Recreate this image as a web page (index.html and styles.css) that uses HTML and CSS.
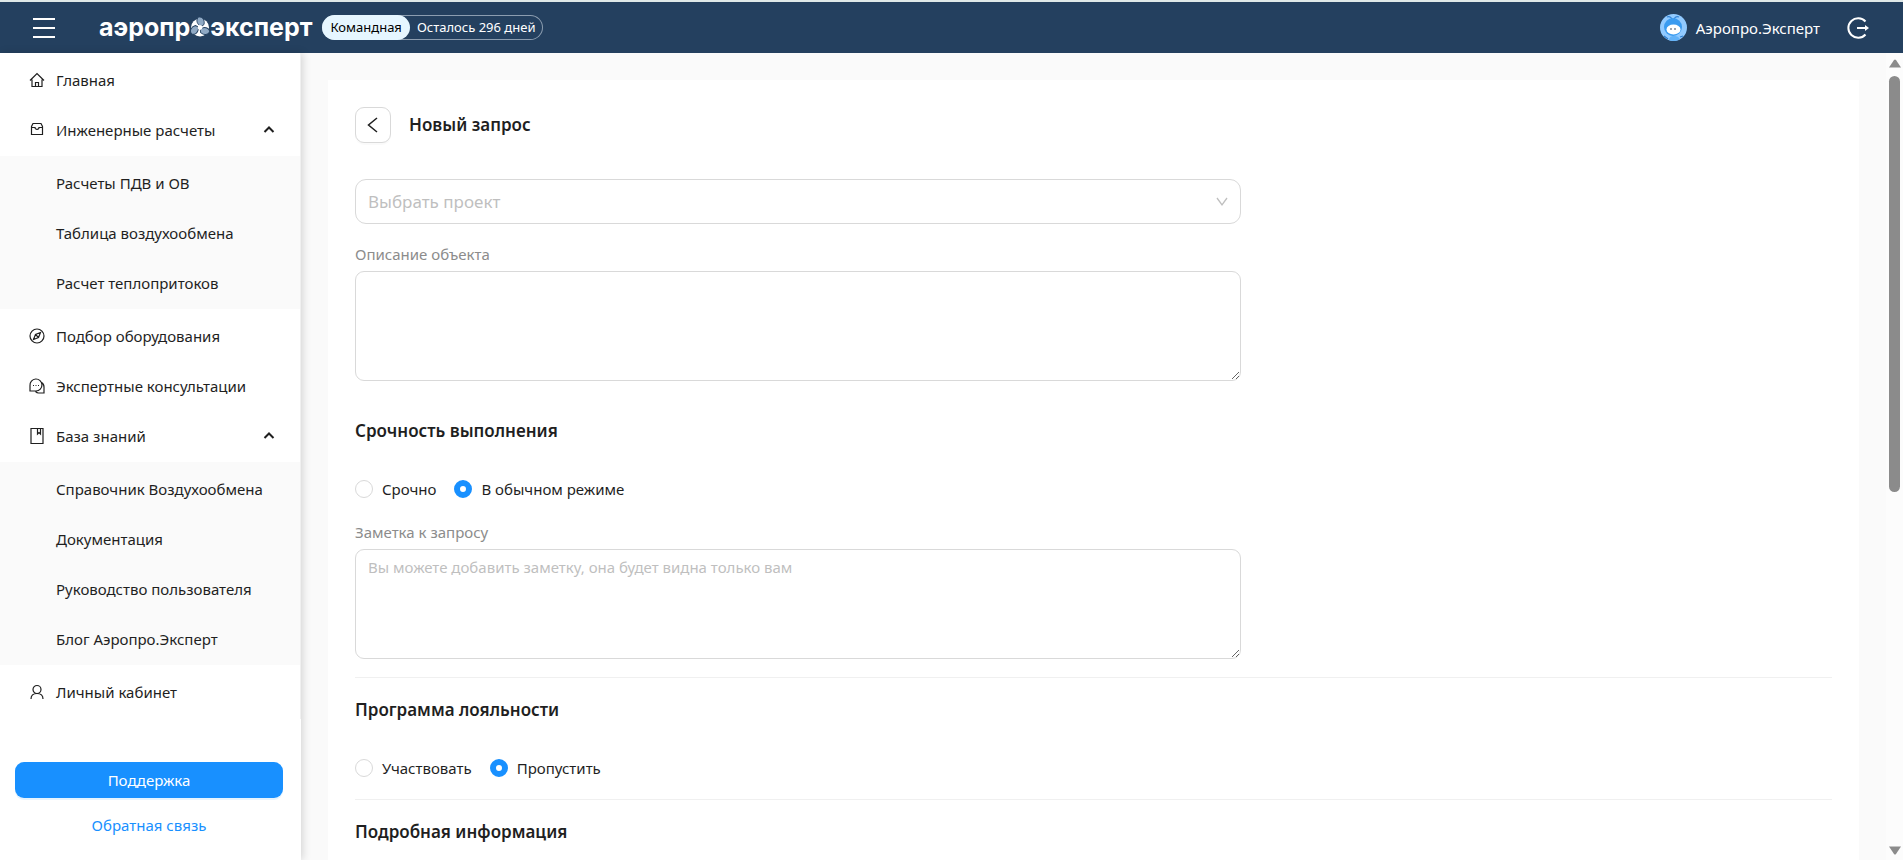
FILE: index.html
```
<!DOCTYPE html>
<html lang="ru">
<head>
    <meta charset="UTF-8">
    <meta name="viewport" content="width=device-width, initial-scale=1.0">
    <title>Аэропро.Эксперт - Новый запрос</title>
    <link rel="stylesheet" href="styles.css">
</head>
<body>
    <header class="header">
        <button class="icon-btn burger" aria-label="Меню">
            <svg width="22" height="22" viewBox="0 0 22 22" fill="none" stroke="currentColor" stroke-width="2">
                <path d="M0 2h22M0 11h22M0 20h22"/>
            </svg>
        </button>
        <a href="#" class="logo">
            <span>аэропр</span>
            <svg width="20" height="20" viewBox="0 0 20 20">
                <circle cx="10" cy="10.500" r="9" fill="#fff"/>
                <g fill="#8fa9c4" stroke="#24405f" stroke-width="0.900">
                    <path id="blade" d="M9.500 8.500C6.500 6 6 2.500 8.500 0c4-.500 6.500 3 5.500 7.500l-2 1.500z"/>
                    <use href="#blade" transform="rotate(120 10 10.500)"/>
                    <use href="#blade" transform="rotate(240 10 10.500)"/>
                </g>
                <circle cx="10" cy="10.500" r="2.400" fill="#fff"/>
            </svg>
            <span>эксперт</span>
        </a>
        <div class="tariff">
            <span class="tariff-name">Командная</span>
            <span class="tariff-days">Осталось 296 дней</span>
        </div>
        <div class="user">
            <svg class="avatar" width="27" height="27" viewBox="0 0 27 27">
                <defs><clipPath id="avatarClip"><circle cx="13.500" cy="13.500" r="13.500"/></clipPath></defs>
                <g clip-path="url(#avatarClip)">
                    <rect width="27" height="27" fill="#91caff"/>
                    <path d="M7 3c2-1 4 0 5 2M19 3c-2-1-4 0-5 2" fill="none" stroke="#2f7fd0" stroke-width="1.200"/>
                    <circle cx="13" cy="13" r="9" fill="#3a9bf0"/>
                    <ellipse cx="13.500" cy="15.500" rx="7" ry="5" fill="#fff"/>
                    <circle cx="11" cy="15" r="0.800" fill="#234"/>
                    <circle cx="15" cy="15" r="0.800" fill="#234"/>
                    <path d="M9 27c0-4 2-5 5-5s6 1 6 5z" fill="#62b2f8"/>
                    <path d="M4 22l4 3M20 23l3-1" stroke="#2f7fd0" stroke-width="1.200"/>
                </g>
            </svg>
            <span>Аэропро.Эксперт</span>
            <button class="icon-btn" aria-label="Выйти">
                <svg width="23" height="22" viewBox="0 0 23 22" fill="none" stroke="currentColor" stroke-width="2">
                    <path d="M18.500 4.500A9.800 9.800 0 1 0 18.500 17.500"/>
                    <path d="M10 11h10"/>
                    <path d="M18 8l4 3-4 3z" fill="currentColor" stroke="none"/>
                </svg>
            </button>
        </div>
    </header>

    <div class="layout">
        <aside class="sidebar">
            <nav class="menu">
                <div class="menu-group">
                    <a href="#" class="menu-item">
                        <svg class="menu-icon" viewBox="0 0 16 16"><path d="M1 8.500L8 1.500l7 7M3 7.500v7h10v-7M6.500 14.500v-4h3v4"/></svg>
                        Главная
                    </a>
                    <button class="menu-item">
                        <svg class="menu-icon" viewBox="0 0 16 16"><path d="M2.500 12.500v-8l1.500-3h8l1.500 3v8zM2.500 5.500h3.500c0 2.500 4 2.500 4 0h3.500"/></svg>
                        Инженерные расчеты
                        <svg class="menu-arrow" viewBox="0 0 12 12"><path d="M1.500 8L6 3.500 10.500 8"/></svg>
                    </button>
                </div>
                <div class="menu-group submenu">
                    <a href="#" class="menu-item">Расчеты ПДВ и ОВ</a>
                    <a href="#" class="menu-item">Таблица воздухообмена</a>
                    <a href="#" class="menu-item">Расчет теплопритоков</a>
                </div>
                <div class="menu-group">
                    <a href="#" class="menu-item">
                        <svg class="menu-icon" viewBox="0 0 16 16"><circle cx="8" cy="8" r="7"/><path d="M11.500 4.500L9.500 9.500 4.500 11.500 6.500 6.500zM6.500 6.500l3 3"/></svg>
                        Подбор оборудования
                    </a>
                    <a href="#" class="menu-item">
                        <svg class="menu-icon" viewBox="0 0 16 16"><path d="M1 13V7.500a6 6 0 1 1 6 5.500zM12.500 4.500c2 1 2.500 3 2.500 4.500v6H9.500c-1 0-2-.500-3-1.500"/><path d="M4 7.500h1M6.500 7.500h1M9 7.500h1"/></svg>
                        Экспертные консультации
                    </a>
                    <button class="menu-item">
                        <svg class="menu-icon" viewBox="0 0 16 16"><path d="M2 .500h12v15H2zM8.500.500v5.500l1.500-1.500L11.500 6V.500"/></svg>
                        База знаний
                        <svg class="menu-arrow" viewBox="0 0 12 12"><path d="M1.500 8L6 3.500 10.500 8"/></svg>
                    </button>
                </div>
                <div class="menu-group submenu">
                    <a href="#" class="menu-item">Справочник Воздухообмена</a>
                    <a href="#" class="menu-item">Документация</a>
                    <a href="#" class="menu-item">Руководство пользователя</a>
                    <a href="#" class="menu-item">Блог Аэропро.Эксперт</a>
                </div>
                <div class="menu-group">
                    <a href="#" class="menu-item">
                        <svg class="menu-icon" viewBox="0 0 16 16"><circle cx="8" cy="5.500" r="4"/><path d="M2 15c0-3.500 2.500-5.500 6-5.500s6 2 6 5.500"/></svg>
                        Личный кабинет
                    </a>
                </div>
            </nav>
            <div class="sidebar-footer">
                <button class="support-btn">Поддержка</button>
                <a href="#" class="feedback">Обратная связь</a>
            </div>
        </aside>

        <main class="content">
            <form class="card">
                <div class="card-header">
                    <button type="button" class="back-btn" aria-label="Назад">
                        <svg width="16" height="16" viewBox="0 0 16 16" fill="none" stroke="currentColor" stroke-width="1.500"><path d="M12 1L3.500 8l8.500 7"/></svg>
                    </button>
                    <h1>Новый запрос</h1>
                </div>

                <div class="select-wrap">
                    <select class="project-select" aria-label="Выбрать проект">
                        <option>Выбрать проект</option>
                    </select>
                    <svg class="select-arrow" viewBox="0 0 12 10"><path d="M1 1l5 7 5-7"/></svg>
                </div>

                <label class="field-label" for="description">Описание объекта</label>
                <textarea id="description"></textarea>

                <h2>Срочность выполнения</h2>
                <div class="radio-group">
                    <label><input type="radio" name="urgency">Срочно</label>
                    <label><input type="radio" name="urgency" checked>В обычном режиме</label>
                </div>

                <label class="field-label" for="note">Заметка к запросу</label>
                <textarea id="note" placeholder="Вы можете добавить заметку, она будет видна только вам"></textarea>

                <section>
                    <h2>Программа лояльности</h2>
                    <div class="radio-group">
                        <label><input type="radio" name="loyalty">Участвовать</label>
                        <label><input type="radio" name="loyalty" checked>Пропустить</label>
                    </div>
                </section>

                <section>
                    <h2>Подробная информация</h2>
                </section>
            </form>
        </main>

        <div class="scrollbar" aria-hidden="true">
            <svg width="12" height="9" viewBox="0 0 12 9"><path d="M0 8.500L5 1q1-1 2 0l5 7.500z"/></svg>
            <div class="scrollbar-track"><div class="scrollbar-thumb"></div></div>
            <svg width="12" height="9" viewBox="0 0 12 9"><path d="M0 .500L5 8q1 1 2 0l5-7.500z"/></svg>
        </div>
    </div>
</body>
</html>
```
FILE: styles.css
```
* {
    margin: 0;
    padding: 0;
    box-sizing: border-box;
}
body {
    display: flex;
    flex-direction: column;
    height: 100vh;
    overflow: hidden;
    font-family: "Segoe UI", "Noto Sans", sans-serif;
    font-size: 15px;
    line-height: 24px;
    color: #1f1f1f;
    background: #fafafa;
}
button, select, textarea {
    font: inherit;
    color: inherit;
}
button {
    cursor: pointer;
}
a {
    color: inherit;
    text-decoration: none;
}

/* Шапка */
.header {
    display: flex;
    align-items: center;
    height: 53px;
    flex-shrink: 0;
    padding: 0 33px;
    border-top: 2px solid #dfe8e8;
    background: #24405f;
    color: #fff;
}
.icon-btn {
    display: flex;
    border: none;
    background: none;
}
.burger {
    margin-right: 44px;
}
.logo {
    display: flex;
    align-items: center;
    font-family: Inter, sans-serif;
    font-size: 25px;
    font-weight: 700;
    line-height: 30px;
    padding-bottom: 2px;
}
.tariff {
    display: flex;
    height: 25px;
    margin-left: 10px;
    border-radius: 13px;
    box-shadow: inset 0 0 0 1px #8c9db0;
    font-size: 13px;
    line-height: 25px;
}
.tariff-name {
    padding: 0 8px;
    border-radius: 13px;
    background: #e6f6ff;
    color: #000;
}
.tariff-days {
    padding: 0 8px 0 7px;
}
.user {
    display: flex;
    align-items: center;
    margin-left: auto;
}
.avatar {
    margin-right: 9px;
}
.user .icon-btn {
    margin-left: 27px;
}

.layout {
    display: flex;
    flex: 1;
    min-height: 0;
}

/* Боковое меню */
.sidebar {
    display: flex;
    flex-direction: column;
    width: 301px;
    flex-shrink: 0;
    background: #fff;
    box-shadow: 2px 0 8px rgba(0, 0, 0, 0.15);
    z-index: 1;
}
.menu {
    padding-bottom: 1px;
    border-right: 1px solid #f0f0f0;
}
.menu-group {
    padding-top: 3px;
}
.menu-item {
    display: flex;
    align-items: center;
    width: 100%;
    height: 50px;
    padding: 0 25px 2px 29px;
    border: none;
    background: none;
    text-align: left;
}
.submenu {
    background: #fafafa;
}
.submenu .menu-item {
    padding-left: 56px;
}
.menu-icon {
    width: 16px;
    height: 16px;
    margin-right: 11px;
    fill: none;
    stroke: currentColor;
    stroke-width: 1.2;
}
.menu-arrow {
    width: 12px;
    height: 12px;
    margin-left: auto;
    fill: none;
    stroke: currentColor;
    stroke-width: 2;
}
.sidebar-footer {
    display: flex;
    flex-direction: column;
    align-items: center;
    gap: 15px;
    margin-top: 43px;
    padding: 0 18px 0 15px;
}
.support-btn {
    width: 100%;
    height: 36px;
    border: none;
    border-radius: 9px;
    background: #1890ff;
    color: #fff;
    box-shadow: 0 2px 0 rgba(5, 145, 255, 0.1);
}
.feedback {
    color: #1890ff;
}

/* Форма запроса */
.content {
    flex: 1;
    padding: 27px 27px 0;
    overflow: hidden;
}
.card {
    min-height: 100%;
    padding: 27px;
    background: #fff;
}
.card-header {
    display: flex;
    align-items: center;
    gap: 18px;
    margin-bottom: 36px;
}
.back-btn {
    display: flex;
    align-items: center;
    justify-content: center;
    width: 36px;
    height: 36px;
    border: 1px solid #d9d9d9;
    border-radius: 9px;
    background: #fff;
    box-shadow: 0 2px 0 rgba(0, 0, 0, 0.02);
}
h1, h2 {
    font-size: 17px;
    font-weight: 600;
    line-height: 28px;
}
.select-wrap {
    position: relative;
    width: 60%;
    margin-bottom: 18px;
}
.project-select {
    display: block;
    width: 100%;
    height: 45px;
    padding: 0 12px;
    appearance: none;
    border: 1px solid #d9d9d9;
    border-radius: 11px;
    background: #fff;
    color: #bfbfbf;
    font-size: 17px;
}
.select-arrow {
    position: absolute;
    top: 18px;
    right: 13px;
    width: 12px;
    height: 10px;
    fill: none;
    stroke: #bfbfbf;
    stroke-width: 1.3;
    pointer-events: none;
}
.field-label {
    display: block;
    margin-bottom: 5px;
    color: #8c8c8c;
}
textarea {
    display: block;
    width: 60%;
    height: 110px;
    padding: 5px 12px;
    border: 1px solid #d9d9d9;
    border-radius: 9px;
    background: #fff;
    resize: vertical;
}
textarea::placeholder {
    color: #bfbfbf;
}
h2 {
    margin-bottom: 32px;
}
textarea + h2 {
    margin-top: 36px;
}
.radio-group {
    display: flex;
    gap: 18px;
    margin-bottom: 19px;
}
.radio-group label {
    display: flex;
    align-items: center;
    gap: 9px;
}
.radio-group input {
    width: 18px;
    height: 18px;
    appearance: none;
    border: 1px solid #d9d9d9;
    border-radius: 50%;
    background: #fff;
}
.radio-group input:checked {
    border: 6px solid #1890ff;
}
section {
    margin-top: 18px;
    padding-top: 18px;
    border-top: 1px solid #f0f0f0;
}

/* Полоса прокрутки */
.scrollbar {
    display: flex;
    flex-direction: column;
    align-items: center;
    width: 17px;
    padding: 6px 0 5px;
    background: #fcfcfc;
    fill: #8b8b8b;
}
.scrollbar-track {
    flex: 1;
    padding-top: 8px;
}
.scrollbar-thumb {
    width: 11px;
    height: 54%;
    border-radius: 6px;
    background: #8b8b8b;
}
```
